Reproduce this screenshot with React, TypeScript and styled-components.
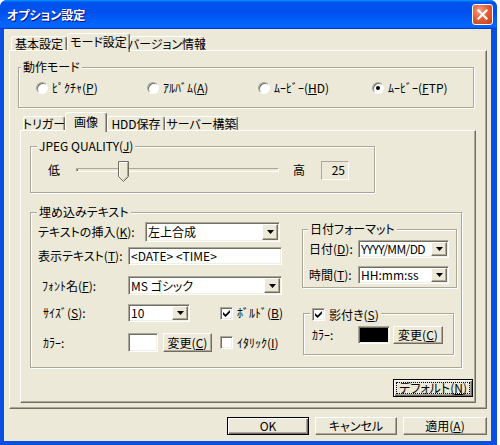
import React from 'react';
import styled, { createGlobalStyle, css } from 'styled-components';

const FACE = '#ECE9D8';
const LIGHT = '#F1EFE2';
const SHADOW = '#ACA899';
const DARK = '#716F64';

const GlobalStyle = createGlobalStyle`
  html, body {
    margin: 0;
    padding: 0;
    background: #fff;
  }
  body {
    font-family: "Noto Sans CJK JP", "Liberation Sans", sans-serif;
    font-size: 12px;
    line-height: 14px;
    color: #000;
    font-feature-settings: "palt" 1;
  }
`;

const raised = css`
  border: 1px solid;
  border-color: #fff ${DARK} ${DARK} #fff;
  box-shadow: inset -1px -1px 0 ${SHADOW};
`;

const sunken = css`
  border: 1px solid;
  border-color: ${SHADOW} #fff #fff ${SHADOW};
  box-shadow: inset 1px 1px 0 ${DARK}, inset -1px -1px 0 ${LIGHT};
`;

const Window = styled.div`
  width: 497px;
  height: 445px;
  display: flex;
  flex-direction: column;
  background: #0A4FDF;
  border-radius: 7px 7px 0 0;
  overflow: hidden;
`;

const TitleBar = styled.div`
  height: 29px;
  flex: none;
  display: flex;
  align-items: center;
  justify-content: space-between;
  padding: 0 4px 0 7px;
  background: linear-gradient(180deg, #0997ff, #0053ee 8%, #0050ee 40%, #06f 88%, #06f 93%, #005bff 95%, #003dd7 96%, #003dd7);
`;

const TitleText = styled.span`
  color: #fff;
  font-weight: bold;
  font-size: 12px;
  text-shadow: 1px 1px 0 #0f1089;
`;

const CloseButton = styled.div`
  width: 21px;
  height: 21px;
  box-sizing: border-box;
  border: 1px solid #fff;
  border-radius: 3px;
  background: radial-gradient(circle at 35% 30%, #f3a07f 0%, #e2603a 45%, #d24a1e 80%, #c0401a 100%);
  display: flex;
  align-items: center;
  justify-content: center;
`;

const Client = styled.div`
  flex: 1;
  margin: 0 6px 4px 4px;
  background: ${FACE};
  padding: 4px 4px 0 5px;
  display: flex;
  flex-direction: column;
`;

const TabStrip = styled.div<{ $ml: number; $h: number; $mt?: number }>`
  display: flex;
  align-items: flex-end;
  height: ${p => p.$h}px;
  margin: ${p => p.$mt || 0}px 0 0 ${p => p.$ml}px;
  position: relative;
  z-index: 1;
`;

const Tab = styled.div<{ $w: number; $active?: boolean; $activeH: number }>`
  box-sizing: border-box;
  width: ${p => p.$w}px;
  height: ${p => (p.$active ? p.$activeH : 14)}px;
  margin-bottom: ${p => (p.$active ? -2 : 0)}px;
  border: 1px solid;
  border-bottom: none;
  border-color: #fff ${DARK} transparent #fff;
  border-radius: 3px 3px 0 0;
  box-shadow: inset -1px 0 0 ${SHADOW};
  background: ${FACE};
  display: flex;
  align-items: center;
  justify-content: center;
  white-space: nowrap;
  padding-bottom: ${p => (p.$active ? 2 : 0)}px;
`;

const TabPanel = styled.div<{ $w: number; $h: number; $ml?: number }>`
  box-sizing: border-box;
  width: ${p => p.$w}px;
  height: ${p => p.$h}px;
  margin-left: ${p => p.$ml || 0}px;
  ${raised}
  display: flex;
  flex-direction: column;
  align-items: flex-start;
`;

const Group = styled.fieldset<{ $w: number; $mt: number; $ml: number; $pb: number }>`
  box-sizing: border-box;
  width: ${p => p.$w}px;
  min-width: 0;
  margin: ${p => p.$mt}px 0 0 ${p => p.$ml}px;
  padding: 0 0 ${p => p.$pb}px 0;
  border: 1px solid ${SHADOW};
  box-shadow: inset 1px 1px 0 #fff, 1px 1px 0 #fff;
`;

const Legend = styled.legend<{ $ml: number }>`
  margin-left: ${p => p.$ml}px;
  padding: 0 2px;
  height: 14px;
  line-height: 14px;
  background: ${FACE};
`;

const LegendInner = styled.span`
  display: inline-flex;
  align-items: center;
  gap: 4px;
  height: 14px;
`;

const Caption = styled.span`
  white-space: nowrap;
`;

const Key = styled.u`
  text-underline-offset: 1px;
`;

const RadioRow = styled.div`
  display: grid;
  grid-template-columns: 111px 111px 114px auto;
  height: 14px;
  margin: 7px 0 12px 17px;
`;

const Choice = styled.label`
  display: flex;
  align-items: center;
  gap: 4px;
  white-space: nowrap;
`;

const RadioDot = styled.span<{ $checked?: boolean }>`
  width: 12px;
  height: 12px;
  flex: none;
  box-sizing: border-box;
  border-radius: 50%;
  background: #fff;
  border: 1px solid;
  border-color: ${SHADOW} #fff #fff ${SHADOW};
  box-shadow: inset 1px 1px 0 ${DARK};
  display: flex;
  align-items: center;
  justify-content: center;
  &::after {
    content: '';
    width: 4px;
    height: 4px;
    border-radius: 50%;
    background: ${p => (p.$checked ? '#000' : 'transparent')};
  }
`;

const SliderRow = styled.div`
  display: flex;
  align-items: center;
  height: 20px;
  margin: 7px 0 12px 17px;
`;

const SideLabel = styled.span<{ $ml?: number }>`
  width: 12px;
  margin-left: ${p => p.$ml || 0}px;
`;

const Track = styled.div<{ $w: number; $ml: number }>`
  position: relative;
  box-sizing: border-box;
  width: ${p => p.$w}px;
  height: 4px;
  margin-left: ${p => p.$ml}px;
  border: 1px solid;
  border-color: ${SHADOW} #fff #fff ${SHADOW};
  box-shadow: inset 1px 0 0 ${DARK};
`;

const Thumb = styled.svg`
  position: absolute;
  top: -8px;
`;

const ValueBox = styled.div<{ $ml: number }>`
  box-sizing: border-box;
  width: 28px;
  height: 19px;
  margin-left: ${p => p.$ml}px;
  border: 1px solid;
  border-color: ${SHADOW} #fff #fff ${SHADOW};
  display: flex;
  align-items: center;
  justify-content: flex-end;
  padding-right: 3px;
`;

const Columns = styled.div`
  display: flex;
  align-items: flex-start;
`;

const Column = styled.div<{ $w?: number }>`
  display: flex;
  flex-direction: column;
  ${p => (p.$w ? `width: ${p.$w}px;` : '')}
  flex: none;
`;

const FormRow = styled.div<{ $mt: number; $h: number }>`
  display: flex;
  align-items: center;
  height: ${p => p.$h}px;
  margin-top: ${p => p.$mt}px;
`;

const FieldLabel = styled.span<{ $ml: number; $w: number }>`
  flex: none;
  width: ${p => p.$w}px;
  margin-left: ${p => p.$ml}px;
  white-space: nowrap;
`;

const Field = styled.div<{ $w: number }>`
  box-sizing: border-box;
  width: ${p => p.$w}px;
  height: 100%;
  flex: none;
  ${sunken}
  background: #fff;
  padding: 1px;
  display: flex;
  align-items: stretch;
`;

const FieldText = styled.span<{ $tight?: boolean }>`
  flex: 1;
  min-width: 0;
  display: flex;
  align-items: center;
  padding-left: 1px;
  white-space: nowrap;
  letter-spacing: ${p => (p.$tight ? '-0.6px' : '0')};
`;

const DropButton = styled.span`
  width: 16px;
  flex: none;
  box-sizing: border-box;
  ${raised}
  background: ${FACE};
  display: flex;
  align-items: center;
  justify-content: center;
`;

const CheckField = styled.label<{ $ml?: number }>`
  display: flex;
  align-items: center;
  gap: 4px;
  margin-left: ${p => p.$ml || 0}px;
  white-space: nowrap;
`;

const CheckBox = styled.span`
  width: 13px;
  height: 13px;
  flex: none;
  box-sizing: border-box;
  ${sunken}
  background: #fff;
  display: flex;
  align-items: center;
  justify-content: center;
`;

const Swatch = styled.span<{ $w: number; $color: string }>`
  box-sizing: border-box;
  width: ${p => p.$w}px;
  height: 100%;
  flex: none;
  ${sunken}
  background: ${p => p.$color};
`;

const Button = styled.button<{ $w: number; $h: number; $ml?: number; $default?: boolean; $mt?: number; $mr?: number; $end?: boolean }>`
  box-sizing: border-box;
  width: ${p => p.$w}px;
  height: ${p => p.$h}px;
  margin: ${p => p.$mt || 0}px ${p => p.$mr || 0}px 0 ${p => p.$ml || 0}px;
  ${p => (p.$end ? 'align-self: flex-end;' : '')}
  padding: 2px;
  font: inherit;
  color: #000;
  background: ${FACE};
  flex: none;
  display: flex;
  align-items: stretch;
  border: 1px solid;
  ${p =>
    p.$default
      ? css`
          border-color: #000;
          box-shadow: inset 1px 1px 0 #fff, inset -1px -1px 0 ${DARK}, inset -2px -2px 0 ${SHADOW};
        `
      : css`
          border-color: #fff ${DARK} ${DARK} #fff;
          box-shadow: inset -1px -1px 0 ${SHADOW};
          padding: 1px;
        `}
`;

const ButtonFace = styled.span<{ $focus?: boolean }>`
  flex: 1;
  display: flex;
  align-items: center;
  justify-content: center;
  border: 1px dotted ${p => (p.$focus ? '#000' : 'transparent')};
  white-space: nowrap;
`;

const ButtonBar = styled.div`
  display: flex;
  justify-content: flex-end;
  gap: 6px;
  margin-top: 8px;
`;

const Arrow = () => (
  <svg width="7" height="4" viewBox="0 0 7 4">
    <path d="M0 0H7L3.5 4Z" fill="#000" />
  </svg>
);

const Tick = () => (
  <svg width="7" height="7" viewBox="0 0 7 7">
    <path d="M0 2L2.5 4.5L7 0V2.5L2.5 7L0 4.5Z" fill="#000" />
  </svg>
);

const ComboBox = ({ w, value, tight }: { w: number; value: string; tight?: boolean }) => (
  <Field $w={w}>
    <FieldText $tight={tight}>{value}</FieldText>
    <DropButton>
      <Arrow />
    </DropButton>
  </Field>
);

const Check = ({ checked }: { checked?: boolean }) => <CheckBox>{checked && <Tick />}</CheckBox>;

const App: React.FC = () => {
  const quality = 25;
  const thumbLeft = Math.round(((quality - 5) / 95) * 193);

  return (
    <Window>
      <GlobalStyle />
      <TitleBar>
        <TitleText>オプション設定</TitleText>
        <CloseButton>
          <svg width="11" height="11" viewBox="0 0 11 11">
            <path d="M1.5 1.5L9.5 9.5M9.5 1.5L1.5 9.5" stroke="#fff" strokeWidth="2.2" strokeLinecap="square" />
          </svg>
        </CloseButton>
      </TitleBar>
      <Client>
        <TabStrip $ml={2} $h={17}>
          <Tab $w={56} $activeH={19}>基本設定</Tab>
          <Tab $w={63} $activeH={19} $active>モード設定</Tab>
          <Tab $w={74} $activeH={19}>バージョン情報</Tab>
        </TabStrip>
        <TabPanel $w={478} $h={359}>
          <Group $w={456} $mt={9} $ml={8} $pb={0}>
            <Legend $ml={2}>動作モード</Legend>
            <RadioRow>
              <Choice><RadioDot /><Caption>ﾋﾟｸﾁｬ(<Key>P</Key>)</Caption></Choice>
              <Choice><RadioDot /><Caption>ｱﾙﾊﾞﾑ(<Key>A</Key>)</Caption></Choice>
              <Choice><RadioDot /><Caption>ﾑｰﾋﾞｰ(<Key>H</Key>D)</Caption></Choice>
              <Choice><RadioDot $checked /><Caption>ﾑｰﾋﾞｰ(<Key>F</Key>TP)</Caption></Choice>
            </RadioRow>
          </Group>

          <TabStrip $ml={13} $h={18} $mt={4}>
            <Tab $w={42} $activeH={20}>トリガー</Tab>
            <Tab $w={42} $activeH={20} $active>画像</Tab>
            <Tab $w={58} $activeH={20}>HDD保存</Tab>
            <Tab $w={73} $activeH={20}>サーバー構築</Tab>
          </TabStrip>
          <TabPanel $w={456} $h={273} $ml={10}>
            <Group $w={345} $mt={8} $ml={9} $pb={0}>
              <Legend $ml={6}>JPEG QUALITY(<Key>J</Key>)</Legend>
              <SliderRow>
                <SideLabel>低</SideLabel>
                <Track $w={203} $ml={16}>
                  <Thumb width="11" height="21" viewBox="0 0 11 21" style={{ left: thumbLeft }}>
                    <path d="M0.5 0.5H10.5V15.5L5.5 20.5L0.5 15.5Z" fill={FACE} stroke={DARK} />
                    <path d="M1.5 15V1.5H9.5" fill="none" stroke="#fff" />
                    <path d="M9.5 1.5V15.1L5.5 19.1" fill="none" stroke={SHADOW} />
                  </Thumb>
                </Track>
                <SideLabel $ml={14}>高</SideLabel>
                <ValueBox $ml={16}>{quality}</ValueBox>
              </SliderRow>
            </Group>

            <Group $w={432} $mt={12} $ml={9} $pb={12}>
              <Legend $ml={6}>埋め込みテキスト</Legend>
              <Columns>
                <Column $w={271}>
                  <FormRow $mt={3} $h={20}>
                    <FieldLabel $ml={7} $w={107}>テキストの挿入(<Key>K</Key>):</FieldLabel>
                    <ComboBox w={135} value="左上合成" />
                  </FormRow>
                  <FormRow $mt={5} $h={18}>
                    <FieldLabel $ml={7} $w={90}>表示テキスト(<Key>T</Key>):</FieldLabel>
                    <Field $w={154}>
                      <FieldText>&lt;DATE&gt; &lt;TIME&gt;</FieldText>
                    </Field>
                  </FormRow>
                  <FormRow $mt={11} $h={19}>
                    <FieldLabel $ml={11} $w={86}>ﾌｫﾝﾄ名(<Key>F</Key>):</FieldLabel>
                    <ComboBox w={154} value="MS ゴシック" />
                  </FormRow>
                  <FormRow $mt={9} $h={18}>
                    <FieldLabel $ml={12} $w={85}>ｻｲｽﾞ(<Key>S</Key>):</FieldLabel>
                    <ComboBox w={62} value="10" />
                    <CheckField $ml={30}>
                      <Check checked />
                      <Caption>ﾎﾞﾙﾄﾞ(<Key>B</Key>)</Caption>
                    </CheckField>
                  </FormRow>
                  <FormRow $mt={11} $h={19}>
                    <FieldLabel $ml={12} $w={85}>ｶﾗｰ:</FieldLabel>
                    <Swatch $w={30} $color="#fff" />
                    <Button $w={49} $h={19} $ml={5}>
                      <ButtonFace>変更(<Key>C</Key>)</ButtonFace>
                    </Button>
                    <CheckField $ml={8}>
                      <Check />
                      <Caption>ｲﾀﾘｯｸ(<Key>I</Key>)</Caption>
                    </CheckField>
                  </FormRow>
                </Column>

                <Column>
                  <Group $w={155} $mt={3} $ml={0} $pb={3}>
                    <Legend $ml={5}>日付フォーマット</Legend>
                    <FormRow $mt={4} $h={18}>
                      <FieldLabel $ml={6} $w={49}>日付(<Key>D</Key>):</FieldLabel>
                      <ComboBox w={91} value="YYYY/MM/DD" tight />
                    </FormRow>
                    <FormRow $mt={8} $h={18}>
                      <FieldLabel $ml={6} $w={49}>時間(<Key>T</Key>):</FieldLabel>
                      <ComboBox w={91} value="HH:mm:ss" />
                    </FormRow>
                  </Group>
                  <Group $w={151} $mt={18} $ml={1} $pb={10}>
                    <Legend $ml={6}>
                      <LegendInner>
                        <Check checked />
                        <Caption>影付き(<Key>S</Key>)</Caption>
                      </LegendInner>
                    </Legend>
                    <FormRow $mt={6} $h={18}>
                      <FieldLabel $ml={8} $w={46}>ｶﾗｰ:</FieldLabel>
                      <Swatch $w={32} $color="#000" />
                      <Button $w={50} $h={18} $ml={3}>
                        <ButtonFace>変更(<Key>C</Key>)</ButtonFace>
                      </Button>
                    </FormRow>
                  </Group>
                </Column>
              </Columns>
            </Group>

            <Button $w={80} $h={18} $mt={11} $mr={2} $end $default>
              <ButtonFace $focus>デフォルト(<Key>N</Key>)</ButtonFace>
            </Button>
          </TabPanel>
        </TabPanel>
        <ButtonBar>
          <Button $w={82} $h={18} $default>
            <ButtonFace>OK</ButtonFace>
          </Button>
          <Button $w={82} $h={18}>
            <ButtonFace>キャンセル</ButtonFace>
          </Button>
          <Button $w={84} $h={18}>
            <ButtonFace>適用(<Key>A</Key>)</ButtonFace>
          </Button>
        </ButtonBar>
      </Client>
    </Window>
  );
};

export default App;
